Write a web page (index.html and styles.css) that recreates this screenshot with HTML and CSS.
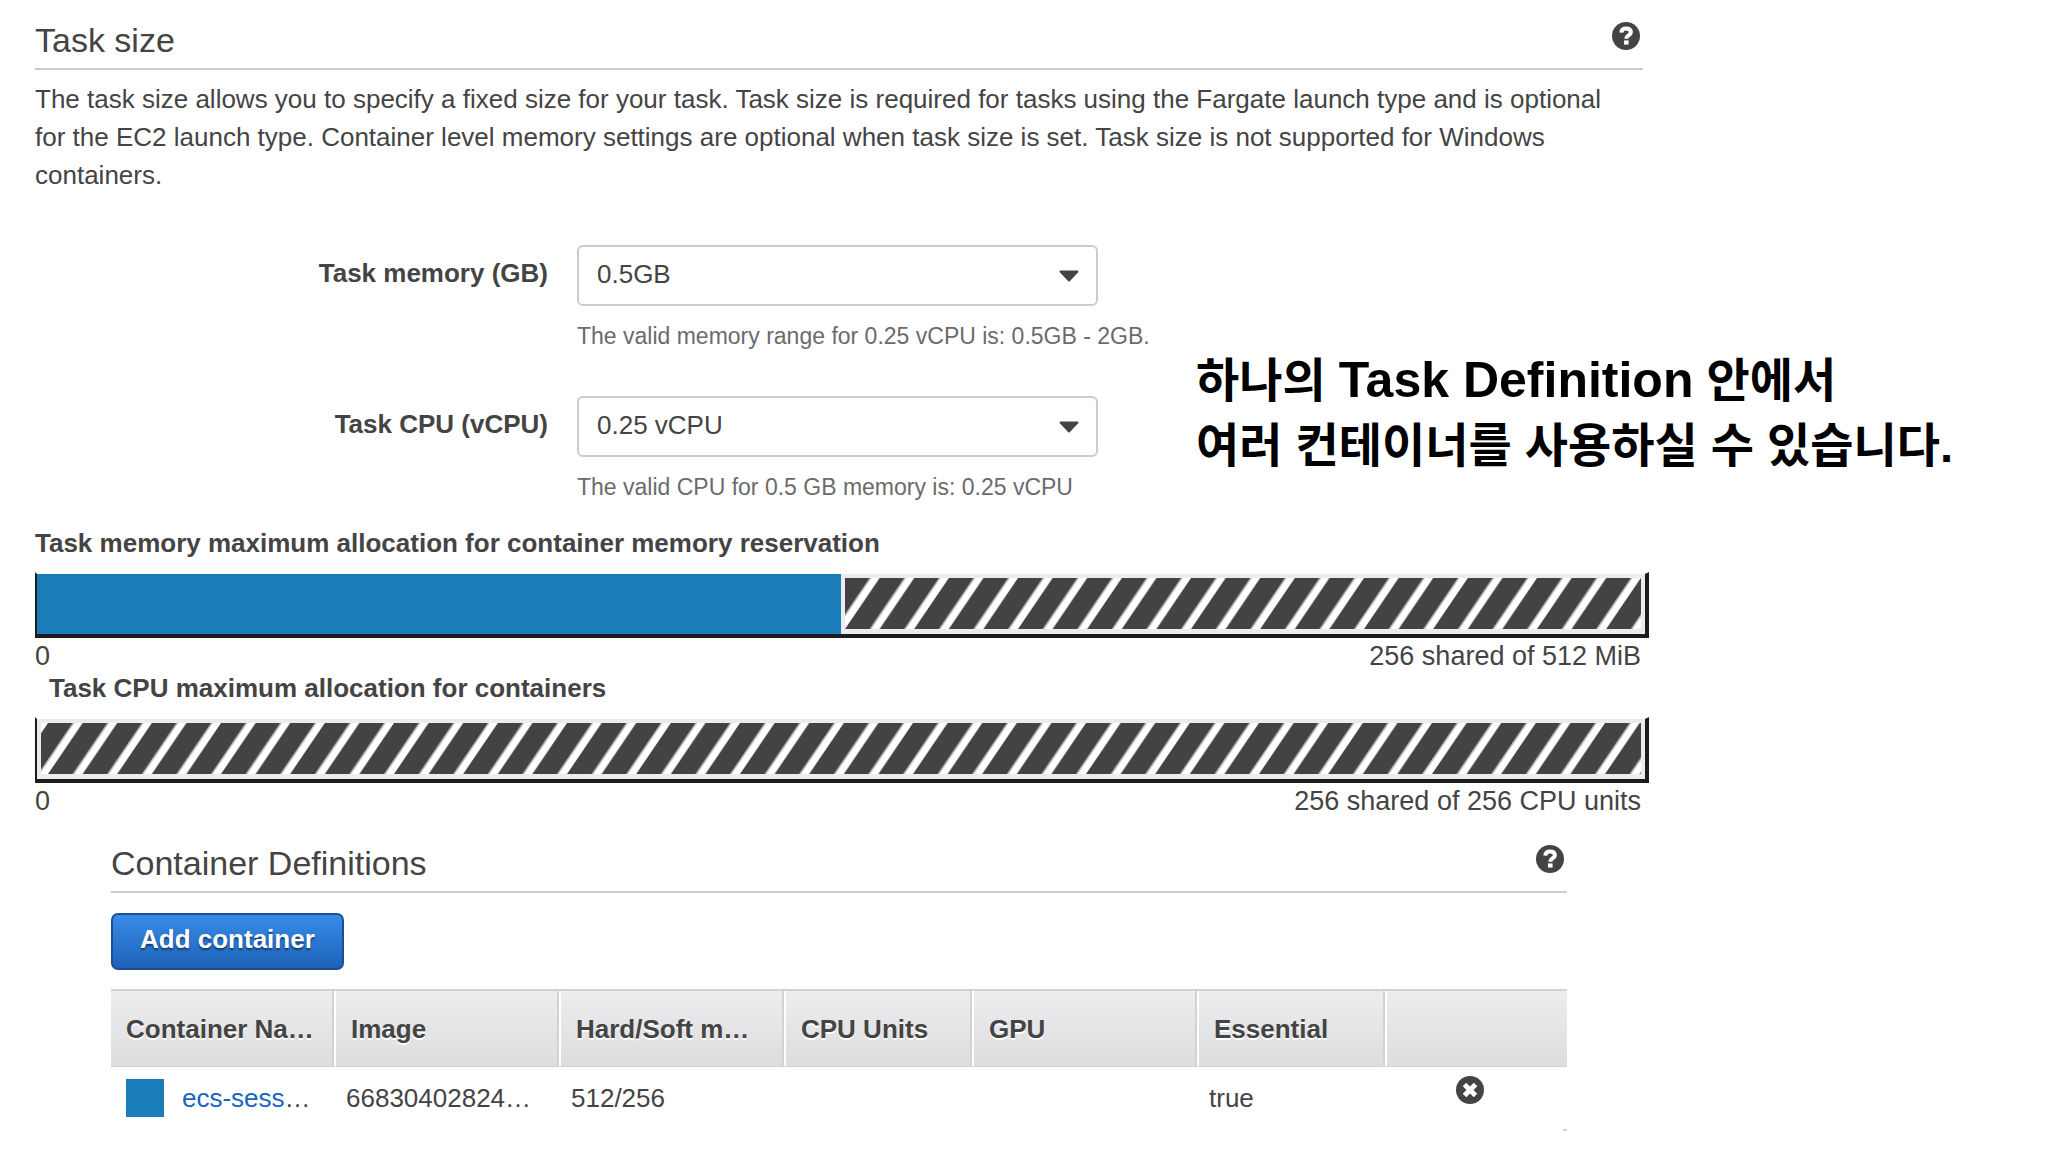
FILE: index.html
```html
<!DOCTYPE html>
<html lang="en">
  <head>
    <meta charset="utf-8">
    <meta name="viewport" content="width=device-width, initial-scale=1">
    <title>Task size</title>
    <link rel="stylesheet" href="styles.css">
  </head>
  <body>
    <main class="page">
      <!-- Task size -->
      <section class="intro">
        <div class="section-header">
          <h2>Task size</h2>
          <button class="icon-button" type="button" aria-label="Help: task size">
            <svg viewBox="0 0 28 28" fill="none">
              <circle cx="14" cy="14" r="14" fill="#444"/>
              <path d="M9.3 10.6C9.5 7.8 11.3 6.6 14 6.6C17 6.6 18.9 8 18.9 10.3C18.9 13.3 14.3 13.2 14.3 16.8" stroke="#fff" stroke-width="4"/>
              <rect x="12" y="18.4" width="4.6" height="4.2" fill="#fff"/>
            </svg>
          </button>
        </div>
        <p>The task size allows you to specify a fixed size for your task. Task size is required for tasks using the Fargate launch type and is optional for the EC2 launch type. Container level memory settings are optional when task size is set. Task size is not supported for Windows containers.</p>
      </section>

      <div class="settings">
        <form class="fields">
          <label for="taskMemory">Task memory (GB)</label>
          <div class="control">
            <select id="taskMemory">
              <option>0.5GB</option>
              <option>1GB</option>
              <option>2GB</option>
            </select>
            <p class="hint">The valid memory range for 0.25 vCPU is: 0.5GB - 2GB.</p>
          </div>

          <label for="taskCpu">Task CPU (vCPU)</label>
          <div class="control">
            <select id="taskCpu">
              <option>0.25 vCPU</option>
            </select>
            <p class="hint">The valid CPU for 0.5 GB memory is: 0.25 vCPU</p>
          </div>
        </form>

        <p class="note" lang="ko">하나의 <span class="latin">Task Definition</span> 안에서<br>여러 컨테이너를 사용하실 수 있습니다.</p>
      </div>

      <!-- Allocation bars -->
      <section class="allocation">
        <h3>Task memory maximum allocation for container memory reservation</h3>
        <div class="bar">
          <div class="used" style="width: 50%"></div>
          <div class="shared">
            <svg width="100%" height="100%">
              <defs>
                <pattern id="memoryStripes" width="34.6" height="51" patternUnits="userSpaceOnUse">
                  <path d="M24 51L58.6 0H61L26.4 51ZM-10.6 51L24 0H26.4L-8.2 51Z" fill="#bbb"/>
                  <path d="M0 51H24.6L59.2 0H34.6ZM-34.6 51H-10L24.6 0H0Z" fill="#444245"/>
                </pattern>
              </defs>
              <rect width="100%" height="100%" fill="url(#memoryStripes)"/>
            </svg>
          </div>
        </div>
        <div class="scale">
          <span>0</span>
          <span>256 shared of 512 MiB</span>
        </div>

        <h3 class="indented">Task CPU maximum allocation for containers</h3>
        <div class="bar">
          <div class="shared">
            <svg width="100%" height="100%">
              <defs>
                <pattern id="cpuStripes" x="7" width="34.6" height="51" patternUnits="userSpaceOnUse">
                  <path d="M24 51L58.6 0H61L26.4 51ZM-10.6 51L24 0H26.4L-8.2 51Z" fill="#bbb"/>
                  <path d="M0 51H24.6L59.2 0H34.6ZM-34.6 51H-10L24.6 0H0Z" fill="#434343"/>
                </pattern>
              </defs>
              <rect width="100%" height="100%" fill="url(#cpuStripes)"/>
            </svg>
          </div>
        </div>
        <div class="scale">
          <span>0</span>
          <span>256 shared of 256 CPU units</span>
        </div>
      </section>

      <!-- Container definitions -->
      <section class="containers">
        <div class="section-header">
          <h2>Container Definitions</h2>
          <button class="icon-button" type="button" aria-label="Help: container definitions">
            <svg viewBox="0 0 28 28" fill="none">
              <circle cx="14" cy="14" r="14" fill="#444"/>
              <path d="M9.3 10.6C9.5 7.8 11.3 6.6 14 6.6C17 6.6 18.9 8 18.9 10.3C18.9 13.3 14.3 13.2 14.3 16.8" stroke="#fff" stroke-width="4"/>
              <rect x="12" y="18.4" width="4.6" height="4.2" fill="#fff"/>
            </svg>
          </button>
        </div>

        <button class="add-button" type="button">Add container</button>

        <table>
          <colgroup>
            <col class="wide">
            <col class="wide">
            <col class="wide">
            <col class="narrow">
            <col class="wide">
            <col class="narrow">
            <col>
          </colgroup>
          <thead>
            <tr>
              <th>Container Na…</th>
              <th>Image</th>
              <th>Hard/Soft m…</th>
              <th>CPU Units</th>
              <th>GPU</th>
              <th>Essential</th>
              <th></th>
            </tr>
          </thead>
          <tbody>
            <tr>
              <td>
                <div class="name">
                  <span class="swatch"></span>
                  <span><a href="#">ecs-sess</a>…</span>
                </div>
              </td>
              <td>66830402824…</td>
              <td>512/256</td>
              <td></td>
              <td></td>
              <td>true</td>
              <td class="actions">
                <button class="icon-button" type="button" aria-label="Remove container">
                  <svg viewBox="0 0 28 28" fill="none">
                    <circle cx="14" cy="14" r="14" fill="#444"/>
                    <path d="M8.5 8.5L19.5 19.5M19.5 8.5L8.5 19.5" stroke="#fff" stroke-width="5"/>
                  </svg>
                </button>
              </td>
            </tr>
          </tbody>
        </table>
      </section>
    </main>
  </body>
</html>
```
FILE: styles.css
```css
* {
  box-sizing: border-box;
  margin: 0;
  padding: 0;
}

body {
  background: #fff;
  color: #444;
  font-family: "Liberation Sans", "Noto Sans CJK KR", sans-serif;
  font-size: 26px;
  line-height: 30px;
}

.page {
  display: grid;
  grid-template-columns: minmax(0, 1fr) 364px;
  padding: 20px 35px 0;
}

.intro,
.allocation,
.containers {
  grid-column: 1;
}

/* Section headings */
.section-header {
  display: flex;
  justify-content: space-between;
  align-items: flex-start;
  padding: 0 3px 8px 0;
  border-bottom: 2px solid #ccc;
}

h2 {
  font-size: 34px;
  font-weight: 400;
  line-height: 40px;
}

.intro {
  padding-right: 6px;
}

.intro p {
  margin-top: 10px;
  padding-right: 14px;
  line-height: 38px;
}

.icon-button {
  display: inline-block;
  width: 28px;
  height: 28px;
  margin-top: 2px;
  border: none;
  background: none;
  cursor: pointer;
}

.icon-button svg {
  display: block;
  width: 28px;
  height: 28px;
}

/* Memory and CPU fields */
.settings {
  grid-column: 1 / -1;
  display: flex;
  gap: 54px;
  margin-top: 51px;
}

.fields {
  display: grid;
  grid-template-columns: 513px 565px;
  gap: 42px 29px;
}

.fields label {
  font-weight: 700;
  line-height: 56px;
  text-align: right;
}

select {
  appearance: none;
  display: block;
  width: 521px;
  height: 61px;
  padding: 0 60px 4px 18px;
  border: 2px solid #ccc;
  border-radius: 6px;
  background: #fff url("data:image/svg+xml,%3Csvg xmlns='http://www.w3.org/2000/svg' viewBox='0 0 20 12'%3E%3Cpath d='M1.5 1.5H18.5L10 10.5Z' fill='%23444' stroke='%23444' stroke-width='2' stroke-linejoin='round'/%3E%3C/svg%3E") no-repeat right 17px center / 20px 12px;
  color: #444;
  font-family: inherit;
  font-size: 26px;
}

.hint {
  margin-top: 12px;
  color: #6b6b6b;
  font-size: 23px;
  line-height: 36px;
  white-space: nowrap;
}

.note {
  padding-top: 103px;
  color: #000;
  font-size: 47px;
  font-weight: 700;
  line-height: 65px;
  white-space: nowrap;
}

.note .latin {
  font-size: 50px;
}

/* Allocation bars */
.allocation {
  margin-top: 23px;
}

h3 {
  font-size: 26px;
  font-weight: 700;
}

h3.indented {
  margin-top: 2px;
  padding-left: 14px;
}

.bar {
  display: flex;
  height: 66px;
  margin-top: 14px;
  border: solid #1c1c1e;
  border-width: 2px 4px 4px 2px;
  border-top-color: transparent;
}

.used {
  background: #1b7cba;
}

.shared {
  flex: 1;
  border: 4px solid #ececee;
  border-bottom-width: 5px;
}

.shared svg {
  display: block;
}

.scale {
  display: flex;
  justify-content: space-between;
  margin-top: 3px;
  padding-right: 8px;
  font-size: 27px;
}

/* Container definitions */
.containers {
  margin: 27px 82px 0 76px;
}

.containers::after {
  content: "";
  display: block;
  width: 4px;
  height: 2px;
  margin-left: auto;
  background: #d2d2d4;
}

.add-button {
  display: block;
  height: 57px;
  margin-top: 20px;
  padding: 0 27px 4px;
  border: 2px solid #1a4f94;
  border-radius: 7px;
  background: linear-gradient(#378ce8, #1f62b8);
  color: #fff;
  font-family: inherit;
  font-size: 26px;
  font-weight: 700;
  text-shadow: 0 2px 2px #123a70;
  cursor: pointer;
}

table {
  width: 100%;
  margin-top: 19px;
  border-collapse: separate;
  border-spacing: 0;
  table-layout: fixed;
}

col.wide {
  width: 225px;
}

col.narrow {
  width: 188px;
}

th {
  height: 78px;
  padding: 0 0 0 15px;
  border-top: 2px solid #d2d2d4;
  border-bottom: 1px solid #d2d2d4;
  background: linear-gradient(#ededef, #dddde0);
  box-shadow: inset -2px 0 #fff, inset -4px 0 #d2d2d4;
  text-align: left;
  text-shadow: 0 2px 0 #fff;
  white-space: nowrap;
}

th:last-child {
  box-shadow: none;
}

td {
  height: 62px;
  padding: 0 0 0 10px;
  white-space: nowrap;
}

td:first-child {
  padding-left: 15px;
}

.name {
  display: flex;
  align-items: center;
  gap: 18px;
}

.swatch {
  width: 38px;
  height: 38px;
  background: #1b7cba;
}

a {
  color: #1764c0;
  text-decoration: none;
}

.actions {
  padding: 7px 14px 0 0;
  text-align: center;
  vertical-align: top;
}
```
